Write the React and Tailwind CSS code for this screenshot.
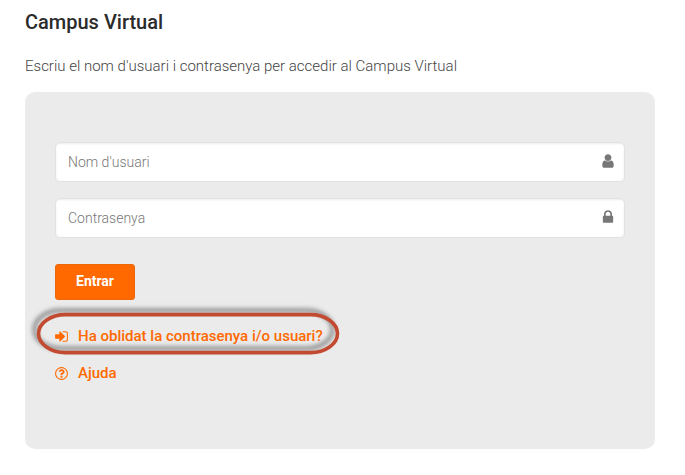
const paths = {
  user:
    "M1536 1399q0 109-62.5 187t-150.5 78h-854q-88 0-150.5-78t-62.5-187q0-85 8.5-160.5t31.5-152 58.5-131 94-89 134.5-34.5q131 128 313 128t313-128q76 0 134.5 34.5t94 89 58.5 131 31.5 152 8.5 160.5zm-256-887q0 159-112.5 271.5t-271.5 112.5-271.5-112.5-112.5-271.5 112.5-271.5 271.5-112.5 271.5 112.5 112.5 271.5z",
  lock:
    "M640 768h512v-192q0-106-75-181t-181-75-181 75-75 181v192zm832 96v576q0 40-28 68t-68 28h-960q-40 0-68-28t-28-68v-576q0-40 28-68t68-28h32v-192q0-184 132-316t316-132 316 132 132 316v192h32q40 0 68 28t28 68z",
  signIn:
    "M1312 896q0 26-19 45l-544 544q-19 19-45 19t-45-19-19-45v-288h-448q-26 0-45-19t-19-45v-384q0-26 19-45t45-19h448v-288q0-26 19-45t45-19 45 19l544 544q19 19 19 45zm352-352v704q0 119-84.5 203.5t-203.5 84.5h-320q-13 0-22.5-9.5t-9.5-22.5q0-4-1-20t-.5-26.5 3-23.5 10-19.5 20.5-6.5h320q66 0 113-47t47-113v-704q0-66-47-113t-113-47h-312l-11.5-1-11.5-3-8-5.5-7-9-2-13.5q0-4-1-20t-.5-26.5 3-23.5 10-19.5 20.5-6.5h320q119 0 203.5 84.5t84.5 203.5z",
  help:
    "M1008 1200v160q0 14-9 23t-23 9h-160q-14 0-23-9t-9-23v-160q0-14 9-23t23-9h160q14 0 23 9t9 23zm256-496q0 50-15 90t-45.5 69-52 44-59.5 36q-32 18-46.5 28t-26 24-11.5 29v32q0 14-9 23t-23 9h-160q-14 0-23-9t-9-23v-68q0-35 10.5-64.5t24-47.5 39-35.5 41-25.5 44.5-21q53-25 75-43t22-49q0-42-43.5-71.5t-95.5-29.5q-56 0-95 27-29 20-80 83-9 12-25 12-11 0-19-6l-108-82q-10-7-12-20t5-23q122-192 349-192 129 0 238.5 89.5t109.5 214.5zm-368-448q-130 0-248.5 51t-204 136.5-136.5 204-51 248.5 51 248.5 136.5 204 204 136.5 248.5 51 248.5-51 204-136.5 136.5-204 51-248.5-51-248.5-136.5-204-204-136.5-248.5-51zm768 640q0 209-103 385.5t-279.5 279.5-385.5 103-385.5-103-279.5-279.5-103-385.5 103-385.5 279.5-279.5 385.5-103 385.5 103 279.5 279.5 103 385.5z",
};

function Icon({ name, className }) {
  return (
    <svg viewBox="0 0 1792 1792" fill="currentColor" aria-hidden="true" className={className}>
      <path d={paths[name]} />
    </svg>
  );
}

function Field({ type, label, icon }) {
  return (
    <label className="flex h-10 items-center rounded-[5px] border border-[#e2e2e2] bg-white pr-2 pl-3 shadow-[inset_0_1px_2px_rgba(0,0,0,0.08)]">
      <input
        type={type}
        placeholder={label}
        aria-label={label}
        className="min-w-0 flex-1 bg-transparent text-sm font-light text-[#555] outline-none placeholder:text-[#777]"
      />
      <Icon name={icon} className="mb-0.5 size-4 text-[#777]" />
    </label>
  );
}

function HelpLink({ icon, children }) {
  return (
    <a href="#" className="flex h-5 w-fit items-center text-[15px] leading-5 font-medium text-[#ff6900]">
      <Icon name={icon} className="mr-[9px] -ml-px size-[15px]" />
      {children}
    </a>
  );
}

export default function App() {
  return (
    <main className="h-[475px] w-[685px] overflow-hidden bg-white pt-[9px] pl-[25px] font-[Roboto,sans-serif]">
      <h1 className="text-xl leading-[26px] font-medium text-[#2b2b2b]">Campus Virtual</h1>
      <p className="mt-[21px] text-[15px] leading-5 font-light text-[#444]">
        Escriu el nom d'usuari i contrasenya per accedir al Campus Virtual
      </p>
      <form className="mt-4 flex h-[357px] w-[630px] flex-col rounded-[10px] bg-[#ebebeb] px-[30px] pt-[50px]">
        <div className="flex flex-col gap-4">
          <Field type="text" label="Nom d'usuari" icon="user" />
          <Field type="password" label="Contrasenya" icon="lock" />
        </div>
        <button
          type="button"
          className="mt-[26px] h-9 w-20 rounded-[3px] border border-[#ec6708] bg-[#ff6900] pb-0.5 text-sm font-bold text-white"
        >
          Entrar
        </button>
        <div className="relative mt-[26px] w-fit">
          <HelpLink icon="signIn">Ha oblidat la contrasenya i/o usuari?</HelpLink>
          <svg
            viewBox="0 0 330 70"
            fill="none"
            aria-hidden="true"
            className="pointer-events-none absolute -top-[31px] -left-[35px] h-[70px] w-[330px] max-w-none"
          >
            <defs>
              <filter id="soft" x="-10%" y="-30%" width="120%" height="160%">
                <feGaussianBlur stdDeviation="1.9" />
              </filter>
            </defs>
            <rect x="14.5" y="15.5" width="298" height="38" rx="26" ry="19" stroke="#777" strokeOpacity="0.75" strokeWidth="4.5" filter="url(#soft)" />
            <rect x="18.5" y="19.6" width="299" height="38" rx="27" ry="19" stroke="#c24a30" strokeWidth="3.6" />
          </svg>
        </div>
        <div className="mt-[17px]">
          <HelpLink icon="help">Ajuda</HelpLink>
        </div>
      </form>
    </main>
  );
}
